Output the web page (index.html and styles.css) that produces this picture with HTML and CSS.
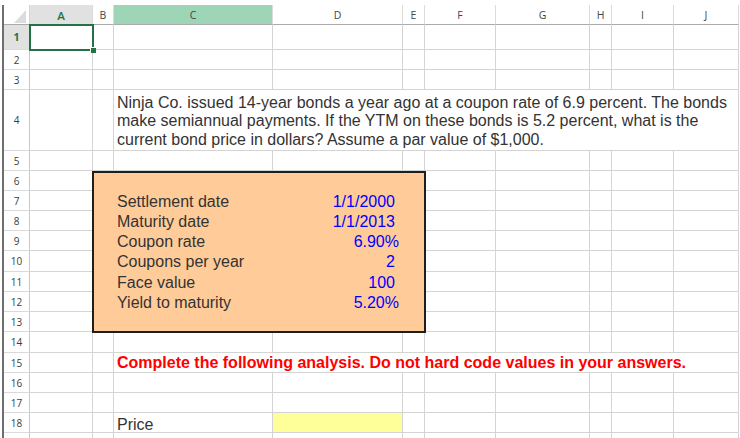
FILE: index.html
```html
<!DOCTYPE html>
<html>
<head>
<meta charset="utf-8">
<link rel="stylesheet" href="styles.css">
</head>
<body>
<div class="sheet">
  <!-- header row -->
  <div class="corner"><svg width="26" height="20" viewBox="0 0 26 20"><polygon points="22,5 22,18 10,18" fill="#dcdcdc"/></svg></div>
  <div class="ch ch-sel">A</div>
  <div class="ch">B</div>
  <div class="ch ch-hl">C</div>
  <div class="ch">D</div>
  <div class="ch">E</div>
  <div class="ch">F</div>
  <div class="ch">G</div>
  <div class="ch">H</div>
  <div class="ch">I</div>
  <div class="ch">J</div>

  <!-- row 1 -->
  <div class="rh rh-sel">1</div>
  <div class="c active"><div class="sel"><span class="handle"></span></div></div>
  <div class="c"></div><div class="c"></div><div class="c"></div><div class="c"></div><div class="c"></div><div class="c"></div><div class="c"></div><div class="c"></div><div class="c"></div>

  <!-- row 2 -->
  <div class="rh">2</div>
  <div class="c"></div><div class="c"></div><div class="c"></div><div class="c"></div><div class="c"></div><div class="c"></div><div class="c"></div><div class="c"></div><div class="c"></div><div class="c"></div>

  <!-- row 3 -->
  <div class="rh">3</div>
  <div class="c"></div><div class="c"></div><div class="c"></div><div class="c"></div><div class="c"></div><div class="c"></div><div class="c"></div><div class="c"></div><div class="c"></div><div class="c"></div>

  <!-- row 4 -->
  <div class="rh">4</div>
  <div class="c"></div><div class="c"></div>
  <div class="c merged question">Ninja Co. issued 14-year bonds a year ago at a coupon rate of 6.9 percent. The bonds<br>make semiannual payments. If the YTM on these bonds is 5.2 percent, what is the<br>current bond price in dollars? Assume a par value of $1,000.</div>

  <!-- row 5 -->
  <div class="rh">5</div>
  <div class="c"></div><div class="c"></div><div class="c"></div><div class="c"></div><div class="c"></div><div class="c"></div><div class="c"></div><div class="c"></div><div class="c"></div><div class="c"></div>

  <!-- input box B6:E13 -->
  <div class="inputs">
    <div class="irow"><span class="lbl">Settlement date</span><span class="val">1/1/2000</span></div>
    <div class="irow"><span class="lbl">Maturity date</span><span class="val">1/1/2013</span></div>
    <div class="irow"><span class="lbl">Coupon rate</span><span class="val pct">6.90%</span></div>
    <div class="irow tall"><span class="lbl">Coupons per year</span><span class="val">2</span></div>
    <div class="irow"><span class="lbl">Face value</span><span class="val">100</span></div>
    <div class="irow"><span class="lbl">Yield to maturity</span><span class="val pct">5.20%</span></div>
  </div>

  <!-- rows 6-13 (B..E covered by the box) -->
  <div class="rh">6</div><div class="c"></div><div class="c"></div><div class="c"></div><div class="c"></div><div class="c"></div><div class="c"></div>
  <div class="rh">7</div><div class="c"></div><div class="c"></div><div class="c"></div><div class="c"></div><div class="c"></div><div class="c"></div>
  <div class="rh">8</div><div class="c"></div><div class="c"></div><div class="c"></div><div class="c"></div><div class="c"></div><div class="c"></div>
  <div class="rh">9</div><div class="c"></div><div class="c"></div><div class="c"></div><div class="c"></div><div class="c"></div><div class="c"></div>
  <div class="rh">10</div><div class="c"></div><div class="c"></div><div class="c"></div><div class="c"></div><div class="c"></div><div class="c"></div>
  <div class="rh">11</div><div class="c"></div><div class="c"></div><div class="c"></div><div class="c"></div><div class="c"></div><div class="c"></div>
  <div class="rh">12</div><div class="c"></div><div class="c"></div><div class="c"></div><div class="c"></div><div class="c"></div><div class="c"></div>
  <div class="rh">13</div><div class="c"></div><div class="c"></div><div class="c"></div><div class="c"></div><div class="c"></div><div class="c"></div>

  <!-- row 14 -->
  <div class="rh">14</div>
  <div class="c"></div><div class="c"></div><div class="c"></div><div class="c"></div><div class="c"></div><div class="c"></div><div class="c"></div><div class="c"></div><div class="c"></div><div class="c"></div>

  <!-- row 15 -->
  <div class="rh">15</div>
  <div class="c"></div><div class="c"></div>
  <div class="c merged warn">Complete the following analysis. Do not hard code values in your answers.</div>

  <!-- row 16 -->
  <div class="rh">16</div>
  <div class="c"></div><div class="c"></div><div class="c"></div><div class="c"></div><div class="c"></div><div class="c"></div><div class="c"></div><div class="c"></div><div class="c"></div><div class="c"></div>

  <!-- row 17 -->
  <div class="rh">17</div>
  <div class="c"></div><div class="c"></div><div class="c"></div><div class="c"></div><div class="c"></div><div class="c"></div><div class="c"></div><div class="c"></div><div class="c"></div><div class="c"></div>

  <!-- row 18 -->
  <div class="rh">18</div>
  <div class="c"></div><div class="c"></div>
  <div class="c txt">Price</div>
  <div class="c answer"></div>
  <div class="c"></div><div class="c"></div><div class="c"></div><div class="c"></div><div class="c"></div><div class="c"></div>

  <!-- row 19 (only its top edge is visible) -->
  <div class="rh"></div>
  <div class="c"></div><div class="c"></div><div class="c"></div><div class="c"></div><div class="c"></div><div class="c"></div><div class="c"></div><div class="c"></div><div class="c"></div><div class="c"></div>
</div>
</body>
</html>
```

FILE: styles.css
```css
html, body {
  margin: 0;
  padding: 0;
  background: #ffffff;
  overflow: hidden;
}

body {
  width: 740px;
  height: 438px;
  font-family: "Liberation Sans", Arial, sans-serif;
  color: #333333;
}

.sheet {
  display: grid;
  grid-template-columns: 26px 63px 21px 159px 130px 22px 71px 94px 22px 62px 65px;
  grid-template-rows: 20px 25px 20px 20px 61px 20px 20px 20px 20px 20px 21px 20px 20px 20px 21px 20px 20px 20px 20px 20px;
  margin: 5px 0 0 2px;
  border-left: 2px solid #6e6e6e;
  width: 735px;
}

.corner {
  border-bottom: 1px solid #ababab;
  border-right: 1px solid #d4d4d4;
  box-sizing: border-box;
}

.corner svg {
  display: block;
}

.ch {
  box-sizing: border-box;
  border-bottom: 1px solid #ababab;
  border-right: 1px solid #dadada;
  font-family: "Open Sans", "Noto Sans", sans-serif;
  font-size: 10.5px;
  color: #444444;
  display: flex;
  align-items: center;
  justify-content: center;
  padding-top: 1px;
}

.ch-sel {
  background: #e1e1e1;
  color: #217346;
  font-weight: 600;
  font-size: 11.5px;
}

.ch-hl {
  background: #9fd5b7;
}

.rh {
  box-sizing: border-box;
  border-bottom: 1px solid #dadada;
  border-right: 1px solid #c8c8c8;
  font-family: "Open Sans", "Noto Sans", sans-serif;
  font-size: 10px;
  color: #3c3c3c;
  display: flex;
  align-items: center;
  justify-content: center;
}

.rh-sel {
  background: #e1e1e1;
  color: #217346;
  font-weight: 700;
  font-size: 10.5px;
}

.c {
  box-sizing: border-box;
  border-right: 1px solid #d4d4d4;
  border-bottom: 1px solid #d4d4d4;
  font-size: 16px;
  color: #333333;
}

.active {
  position: relative;
}

.sel {
  position: absolute;
  left: -1px;
  top: -1px;
  width: 65px;
  height: 27px;
  box-sizing: border-box;
  border: 2px solid #217346;
  z-index: 3;
}

.handle {
  position: absolute;
  right: -4px;
  bottom: -4px;
  width: 5px;
  height: 5px;
  background: #217346;
  border-left: 1px solid #ffffff;
  border-top: 1px solid #ffffff;
}

.merged {
  grid-column: span 8;
}

.question {
  display: flex;
  align-items: flex-end;
  padding: 0 3px 1px 3px;
  line-height: 18.5px;
  white-space: nowrap;
}

.warn {
  display: flex;
  align-items: center;
  padding: 0 3px;
  color: #ff0000;
  font-weight: 700;
  font-size: 16px;
  white-space: nowrap;
}

.txt {
  display: flex;
  align-items: center;
  padding: 4px 3px 0 3px;
}

.answer {
  background: #ffff99;
}

.inputs {
  grid-column: 3 / 7;
  grid-row: 7 / 15;
  position: relative;
  z-index: 2;
  margin: 0 -1px -1px -1px;
  border: 2px solid #1e1e1e;
  background: #ffcc99;
  padding-top: 19px;
  display: flex;
  flex-direction: column;
}

.irow {
  display: flex;
  height: 20px;
  line-height: 20px;
  font-size: 16px;
}

.irow.tall {
  height: 21px;
}

.lbl {
  width: 179px;
  box-sizing: border-box;
  padding-left: 23px;
  color: #333333;
}

.val {
  width: 130px;
  box-sizing: border-box;
  text-align: right;
  padding-right: 8px;
  color: #0000ff;
}

.val.pct {
  padding-right: 4px;
}
```
